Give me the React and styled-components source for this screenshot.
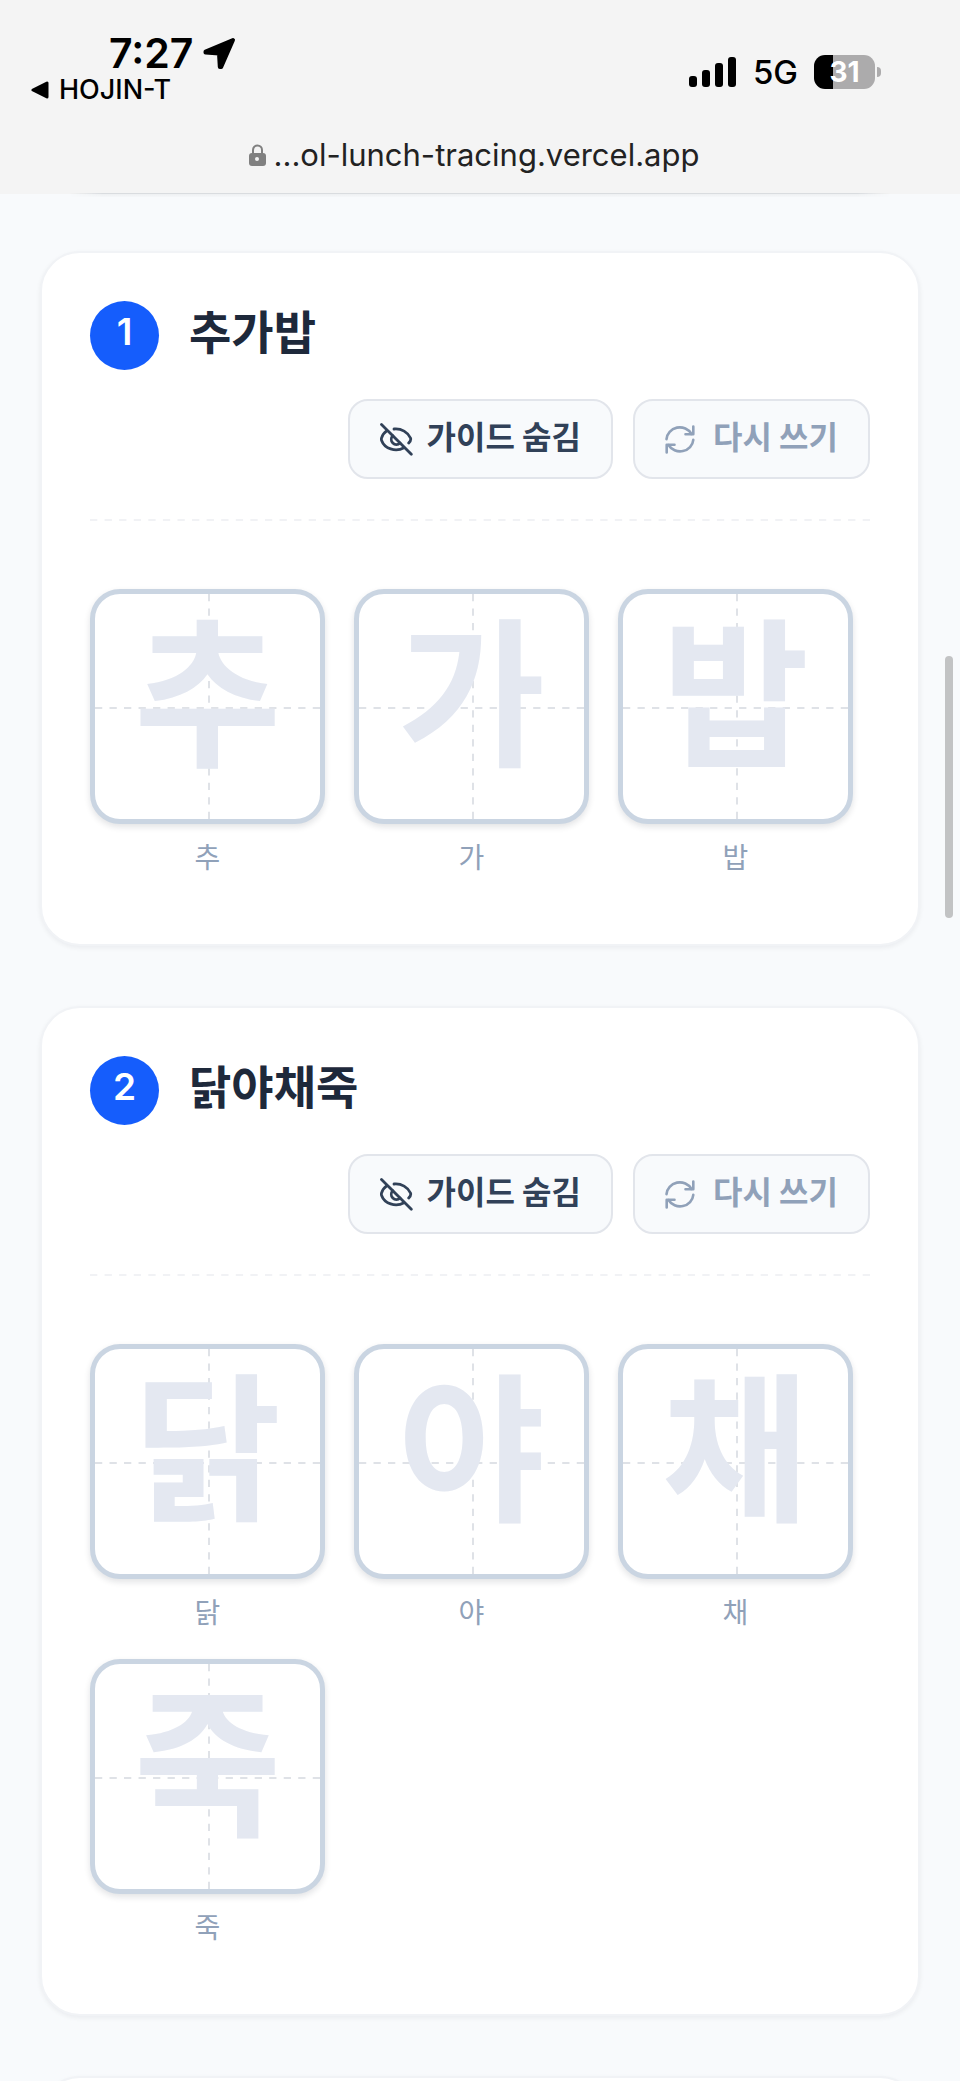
import React, { useState } from 'react';
import styled, { createGlobalStyle, css } from 'styled-components';

const GlobalStyle = createGlobalStyle`
  * {
    box-sizing: border-box;
  }
  body {
    margin: 0;
    background: #f8fafc;
    color: #1e293b;
    font-family: 'Noto Sans CJK KR', 'Noto Sans', sans-serif;
  }
`;

const Page = styled.div`
  position: relative;
  height: 100vh;
  overflow: hidden;
`;

const Header = styled.header`
  position: relative;
  height: 194px;
  background: #f4f4f4;
  color: #000;
  font-family: Inter, 'Liberation Sans', sans-serif;
  &::after {
    content: '';
    position: absolute;
    left: 70px;
    right: 70px;
    bottom: -3px;
    height: 4px;
    background: linear-gradient(#d9dcdf 1px, #eef0f2 1px, #f5f7f9);
    mask-image: linear-gradient(
      to right,
      transparent,
      #000 32px,
      #000 calc(100% - 32px),
      transparent
    );
  }
`;

const StatusBar = styled.div`
  display: flex;
  justify-content: space-between;
  padding: 32px 85px 0 31px;
  height: 134px;
`;

const Clock = styled.div`
  display: flex;
  align-items: center;
  gap: 10px;
  padding-left: 78px;
  font-size: 41px;
  font-weight: 600;
  line-height: 42px;
`;

const BackLink = styled.a`
  display: flex;
  align-items: center;
  gap: 10px;
  color: #000;
  font-size: 27px;
  font-weight: 500;
  line-height: 32px;
  text-decoration: none;
`;

const Signals = styled.div`
  display: flex;
  align-items: center;
  gap: 16px;
  height: 80px;
  font-size: 33px;
  font-weight: 500;
`;

const Battery = styled.div`
  position: relative;
  width: 61px;
  height: 34px;
  border-radius: 11px;
  background: linear-gradient(to right, #000 31%, #acabac 31%);
  color: #fff;
  font-size: 28px;
  font-weight: 700;
  line-height: 34px;
  text-align: center;
  &::after {
    content: '';
    position: absolute;
    left: 63px;
    top: 12px;
    width: 4px;
    height: 10px;
    border-radius: 0 4px 4px 0;
    background: #acabac;
  }
`;

const Address = styled.div`
  display: flex;
  justify-content: center;
  align-items: flex-start;
  gap: 8px;
  padding-right: 12px;
  color: #222;
  font-size: 31px;
  line-height: 42px;
  svg {
    margin-top: 10px;
  }
`;

const List = styled.main`
  display: flex;
  flex-direction: column;
  gap: 60px;
  padding: 57px 40px;
`;

const Card = styled.section`
  min-height: 300px;
  padding: 48px;
  border: 2px solid #f1f3f6;
  border-radius: 40px;
  background: #fff;
  box-shadow: 0 2px 5px rgba(15, 23, 42, 0.06);
`;

const CardHeader = styled.div`
  display: flex;
  flex-direction: column;
  gap: 29px;
  padding-bottom: 40px;
`;

const Heading = styled.div`
  display: flex;
  align-items: flex-start;
  gap: 30px;
`;

const Badge = styled.span`
  display: flex;
  justify-content: center;
  width: 69px;
  height: 69px;
  border-radius: 50%;
  background: #155dfc;
  color: #fff;
  font-family: Inter, sans-serif;
  font-size: 37px;
  font-weight: 600;
  line-height: 62px;
`;

const Title = styled.h2`
  margin: 0;
  font-size: 46px;
  font-weight: 700;
  line-height: 56px;
`;

const Actions = styled.div`
  display: flex;
  justify-content: flex-end;
  gap: 20px;
`;

const Button = styled.button`
  display: flex;
  align-items: center;
  gap: ${(props) => (props.$muted ? '18px' : '14px')};
  height: 80px;
  padding: 0 30px;
  border: 2px solid #e2e5eb;
  border-radius: 20px;
  background: #f8fafc;
  color: #314158;
  font-family: inherit;
  font-size: 32px;
  font-weight: 700;
  line-height: 40px;
  span {
    padding-bottom: 8px;
  }
  ${(props) =>
    props.$muted &&
    css`
      color: #90a1b9;
    `}
`;

const DashedLine = styled.svg`
  display: block;
  width: 100%;
  height: 2px;
`;

const Tiles = styled.div`
  display: flex;
  flex-wrap: wrap;
  gap: 29px;
  padding: 68px 0 21px;
`;

const Figure = styled.figure`
  display: flex;
  flex-direction: column;
  align-items: center;
  gap: 14px;
  margin: 0;
  figcaption {
    padding-bottom: 1px;
    color: #90a1b9;
    font-size: 28px;
    line-height: 36px;
  }
`;

const Tile = styled.div`
  position: relative;
  width: 235px;
  height: 235px;
  border: 5px solid #cad5e2;
  border-radius: 30px;
  background: #fff;
  box-shadow: 0 3px 6px rgba(15, 23, 42, 0.12);
  text-align: center;
  svg {
    position: absolute;
    inset: 0;
  }
`;

const Guide = styled.span`
  display: block;
  position: relative;
  color: #e4e8f1;
  font-size: 160px;
  font-weight: 700;
  line-height: 180px;
`;

const ScrollThumb = styled.div`
  position: absolute;
  top: 656px;
  right: 7px;
  width: 8px;
  height: 262px;
  border-radius: 4px;
  background: #c2c3c4;
`;

const EyeOffIcon = () => (
  <svg
    width='33'
    height='33'
    viewBox='0 0 33 33'
    fill='none'
    stroke='currentColor'
    strokeWidth='2.8'
    strokeLinecap='round'
  >
    <path d='M1.500 1.500 31.300 31.300' />
    <path d='M14 6C21.500 5.200 28 9.500 30.500 15c.5 1.200.1 3-1.800 5' />
    <path d='M7 7.700C4 9.800 2.200 12.500 1.500 15.200c-.2.800-.2 1.400.1 2.200C4.500 25.500 15.500 29.500 24 24.700' />
    <path d='M12.800 12.800a5 5 0 0 0 7.200 7.200' />
  </svg>
);

const RefreshIcon = () => (
  <svg
    width='30'
    height='29'
    viewBox='0 0 30 29'
    fill='none'
    stroke='currentColor'
    strokeWidth='2.6'
    strokeLinecap='round'
    strokeLinejoin='round'
  >
    <path d='M1.500 14.200A13.300 12.600 0 0 1 26.500 9' />
    <path d='M28.300 1.500v7.800h-7.800' />
    <path d='M28.300 14.800A13.300 12.600 0 0 1 3.500 20' />
    <path d='M1.700 27.500v-7.800h7.800' />
  </svg>
);

const words = ['추가밥', '닭야채죽'];

const WordCard = ({ word, index }) => {
  const [showGuide, setShowGuide] = useState(true);
  return (
    <Card>
      <CardHeader>
        <Heading>
          <Badge>{index + 1}</Badge>
          <Title>{word}</Title>
        </Heading>
        <Actions>
          <Button type='button' onClick={() => setShowGuide(!showGuide)}>
            <EyeOffIcon />
            <span>가이드 숨김</span>
          </Button>
          <Button type='button' $muted onClick={() => setShowGuide(true)}>
            <RefreshIcon />
            <span>다시 쓰기</span>
          </Button>
        </Actions>
      </CardHeader>
      <DashedLine>
        <line
          x1='0'
          y1='1'
          x2='100%'
          y2='1'
          stroke='#f1f2f5'
          strokeWidth='2'
          pathLength='107'
          strokeDasharray='1 1'
        />
      </DashedLine>
      <Tiles>
        {[...word].map((char) => (
          <Figure key={char}>
            <Tile>
              <svg
                width='225'
                height='225'
                stroke='#dfe2e7'
                strokeWidth='2'
                strokeDasharray='1 1'
              >
                <line x1='0' y1='114' x2='225' y2='114' pathLength='31' />
                <line x1='114' y1='0' x2='114' y2='225' pathLength='31' />
              </svg>
              {showGuide && <Guide>{char}</Guide>}
            </Tile>
            <figcaption>{char}</figcaption>
          </Figure>
        ))}
      </Tiles>
    </Card>
  );
};

const App = () => (
  <Page>
    <GlobalStyle />
    <Header>
      <StatusBar>
        <div>
          <Clock>
            7:27
            <svg width='33' height='33' viewBox='0 0 33 33'>
              <path
                d='M30 3 2.500 14.700v.8L16 16.500l.8 13.500h1.400Z'
                fill='#000'
                stroke='#000'
                strokeWidth='4'
                strokeLinejoin='round'
              />
            </svg>
          </Clock>
          <BackLink href='#'>
            <svg width='18' height='18' viewBox='0 0 18 18'>
              <path
                d='M2 9 16 2v14Z'
                fill='#000'
                stroke='#000'
                strokeWidth='3'
                strokeLinejoin='round'
              />
            </svg>
            HOJIN-T
          </BackLink>
        </div>
        <Signals>
          <svg width='48' height='32' viewBox='0 0 48 32'>
            <rect x='0' y='20' width='8' height='11' rx='3' />
            <rect x='13' y='14' width='8' height='17' rx='3' />
            <rect x='26' y='7' width='8' height='24' rx='3' />
            <rect x='39' y='1' width='8' height='30' rx='3' />
          </svg>
          5G
          <Battery>31</Battery>
        </Signals>
      </StatusBar>
      <Address>
        <svg width='17' height='22' viewBox='0 0 17 22'>
          <path
            d='M4 10V6a4.500 4.500 0 0 1 9 0v4'
            fill='none'
            stroke='#808080'
            strokeWidth='2'
          />
          <rect x='0' y='9' width='17' height='13' rx='3' fill='#808080' />
          <circle cx='8' cy='15' r='2' fill='#f4f4f4' />
        </svg>
        <span>...ol-lunch-tracing.vercel.app</span>
      </Address>
    </Header>
    <List>
      {words.map((word, index) => (
        <WordCard key={word} word={word} index={index} />
      ))}
      <Card />
    </List>
    <ScrollThumb />
  </Page>
);

export default App;
